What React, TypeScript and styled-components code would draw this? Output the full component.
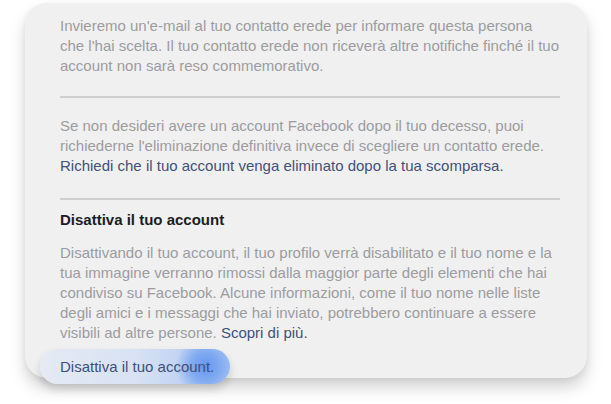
import styled, { createGlobalStyle } from 'styled-components';

const GlobalStyle = createGlobalStyle`
  body {
    margin: 0;
    background: #ffffff;
    font-family: 'Liberation Sans', Arial, sans-serif;
  }
`;

const Page = styled.div`
  width: 611px;
  height: 404px;
  overflow: hidden;
  padding-top: 3px;
  box-sizing: border-box;
`;

const Card = styled.div`
  margin-left: 25px;
  width: 562px;
  height: 375px;
  box-sizing: border-box;
  background: #f0f0f1;
  border-radius: 22px;
  padding: 13px 27px 0 35px;
  box-shadow: 0 10px 16px rgba(0, 0, 0, 0.17), 0 2px 6px rgba(0, 0, 0, 0.06);
  display: flex;
  flex-direction: column;

  & > * {
    flex-shrink: 0;
  }
`;

const Text = styled.p<{ gap?: number }>`
  margin: 0 0 ${(p) => p.gap ?? 0}px;
  font-size: 15px;
  line-height: 20px;
  white-space: nowrap;
  color: #9c9c9f;
`;

const Link = styled.span`
  color: #42517a;
`;

const Divider = styled.hr<{ after: number }>`
  margin: 0 0 ${(p) => p.after}px;
  border: none;
  height: 2px;
  background: #cfcfd1;
`;

const Heading = styled.h3`
  margin: 0 0 13px;
  font-size: 15px;
  line-height: 20px;
  font-weight: bold;
  color: #1c1d20;
`;

const Pill = styled.div`
  align-self: flex-start;
  margin: 6px 0 0 -20px;
  height: 35px;
  padding: 0 16px 0 20px;
  display: flex;
  align-items: center;
  border-radius: 18px;
  font-size: 15px;
  color: #3e4f7c;
  background:
    radial-gradient(circle at 87% 50%, rgba(96, 148, 240, 0.95) 0, rgba(116, 162, 240, 0.78) 15px, rgba(160, 190, 240, 0) 30px),
    linear-gradient(90deg, #e5eaf3 0%, #d8e2f4 50%, #abc5f2 100%);
  box-shadow: 0 5px 9px rgba(0, 0, 0, 0.16);
`;

export default function App() {
  return (
    <>
      <GlobalStyle />
      <Page>
        <Card>
          <Text gap={20}>
            Invieremo un'e-mail al tuo contatto erede per informare questa persona
            <br />
            che l'hai scelta. Il tuo contatto erede non riceverà altre notifiche finché il tuo
            <br />
            account non sarà reso commemorativo.
          </Text>
          <Divider after={18} />
          <Text gap={22}>
            Se non desideri avere un account Facebook dopo il tuo decesso, puoi
            <br />
            richiederne l'eliminazione definitiva invece di scegliere un contatto erede.
            <br />
            <Link>Richiedi che il tuo account venga eliminato dopo la tua scomparsa.</Link>
          </Text>
          <Divider after={10} />
          <Heading>Disattiva il tuo account</Heading>
          <Text>
            Disattivando il tuo account, il tuo profilo verrà disabilitato e il tuo nome e la
            <br />
            tua immagine verranno rimossi dalla maggior parte degli elementi che hai
            <br />
            condiviso su Facebook. Alcune informazioni, come il tuo nome nelle liste
            <br />
            degli amici e i messaggi che hai inviato, potrebbero continuare a essere
            <br />
            visibili ad altre persone. <Link>Scopri di più.</Link>
          </Text>
          <Pill>Disattiva il tuo account.</Pill>
        </Card>
      </Page>
    </>
  );
}
